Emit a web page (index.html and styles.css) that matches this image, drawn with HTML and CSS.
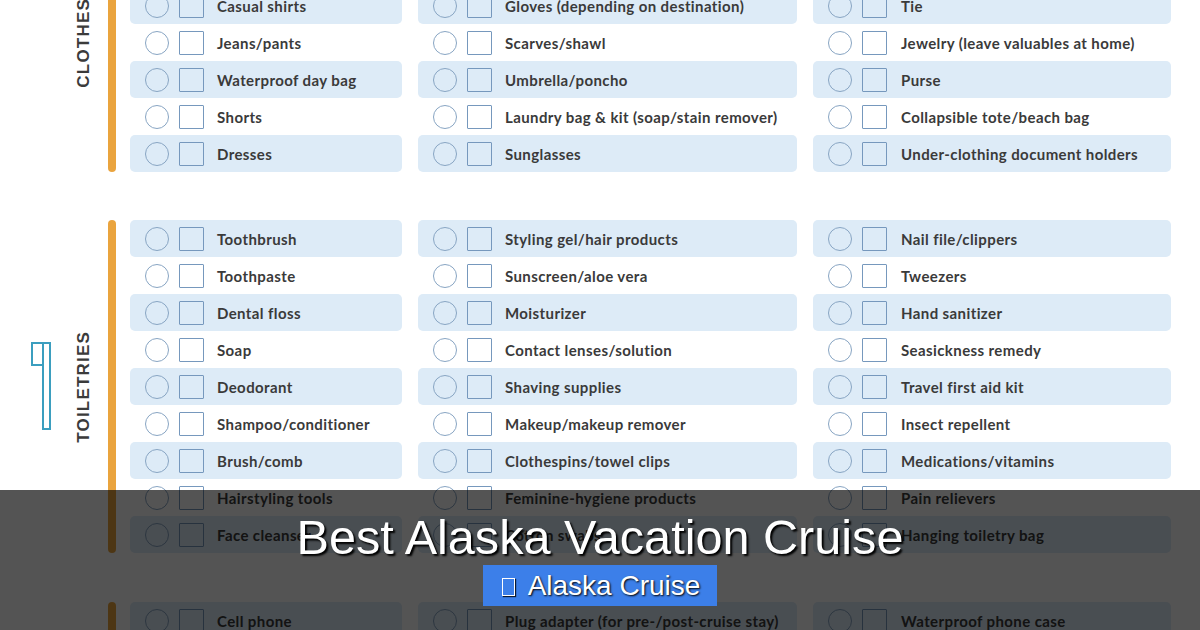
FILE: index.html
```html
<!DOCTYPE html>
<html lang="en">
<head>
<meta charset="utf-8">
<title>Best Alaska Vacation Cruise</title>
<link rel="stylesheet" href="styles.css">
</head>
<body>
<main class="sheet">
  <section class="sec sec-clothes">
    <div class="side">
      <div class="icon"></div>
      <h2 class="label">CLOTHES</h2>
    </div>
    <div class="bar"></div>
    <div class="grid">
      <ul class="col c1">
        <li class="row"><i class="circ"></i><i class="box"></i><span>Shirts/blouses</span></li>
        <li class="row"><i class="circ"></i><i class="box"></i><span>Sweaters</span></li>
        <li class="row"><i class="circ"></i><i class="box"></i><span>Casual shirts</span></li>
        <li class="row"><i class="circ"></i><i class="box"></i><span>Jeans/pants</span></li>
        <li class="row"><i class="circ"></i><i class="box"></i><span>Waterproof day bag</span></li>
        <li class="row"><i class="circ"></i><i class="box"></i><span>Shorts</span></li>
        <li class="row"><i class="circ"></i><i class="box"></i><span>Dresses</span></li>
      </ul>
      <ul class="col c2">
        <li class="row"><i class="circ"></i><i class="box"></i><span>Rain jacket</span></li>
        <li class="row"><i class="circ"></i><i class="box"></i><span>Hat</span></li>
        <li class="row"><i class="circ"></i><i class="box"></i><span>Gloves (depending on destination)</span></li>
        <li class="row"><i class="circ"></i><i class="box"></i><span>Scarves/shawl</span></li>
        <li class="row"><i class="circ"></i><i class="box"></i><span>Umbrella/poncho</span></li>
        <li class="row"><i class="circ"></i><i class="box"></i><span>Laundry bag &amp; kit (soap/stain remover)</span></li>
        <li class="row"><i class="circ"></i><i class="box"></i><span>Sunglasses</span></li>
      </ul>
      <ul class="col c3">
        <li class="row"><i class="circ"></i><i class="box"></i><span>Belt</span></li>
        <li class="row"><i class="circ"></i><i class="box"></i><span>Formal wear</span></li>
        <li class="row"><i class="circ"></i><i class="box"></i><span>Tie</span></li>
        <li class="row"><i class="circ"></i><i class="box"></i><span>Jewelry (leave valuables at home)</span></li>
        <li class="row"><i class="circ"></i><i class="box"></i><span>Purse</span></li>
        <li class="row"><i class="circ"></i><i class="box"></i><span>Collapsible tote/beach bag</span></li>
        <li class="row"><i class="circ"></i><i class="box"></i><span>Under-clothing document holders</span></li>
      </ul>
    </div>
  </section>

  <section class="sec sec-toiletries">
    <div class="side">
      <div class="icon">
        <svg width="20" height="90" viewBox="0 0 20 90" aria-hidden="true">
          <rect x="1" y="1" width="11" height="22" fill="none" stroke="#3b9ebf" stroke-width="2"/>
          <rect x="12" y="1" width="7" height="86" fill="none" stroke="#3b9ebf" stroke-width="2"/>
        </svg>
      </div>
      <h2 class="label">TOILETRIES</h2>
    </div>
    <div class="bar"></div>
    <div class="grid">
      <ul class="col c1">
        <li class="row"><i class="circ"></i><i class="box"></i><span>Toothbrush</span></li>
        <li class="row"><i class="circ"></i><i class="box"></i><span>Toothpaste</span></li>
        <li class="row"><i class="circ"></i><i class="box"></i><span>Dental floss</span></li>
        <li class="row"><i class="circ"></i><i class="box"></i><span>Soap</span></li>
        <li class="row"><i class="circ"></i><i class="box"></i><span>Deodorant</span></li>
        <li class="row"><i class="circ"></i><i class="box"></i><span>Shampoo/conditioner</span></li>
        <li class="row"><i class="circ"></i><i class="box"></i><span>Brush/comb</span></li>
        <li class="row"><i class="circ"></i><i class="box"></i><span>Hairstyling tools</span></li>
        <li class="row"><i class="circ"></i><i class="box"></i><span>Face cleanser</span></li>
      </ul>
      <ul class="col c2">
        <li class="row"><i class="circ"></i><i class="box"></i><span>Styling gel/hair products</span></li>
        <li class="row"><i class="circ"></i><i class="box"></i><span>Sunscreen/aloe vera</span></li>
        <li class="row"><i class="circ"></i><i class="box"></i><span>Moisturizer</span></li>
        <li class="row"><i class="circ"></i><i class="box"></i><span>Contact lenses/solution</span></li>
        <li class="row"><i class="circ"></i><i class="box"></i><span>Shaving supplies</span></li>
        <li class="row"><i class="circ"></i><i class="box"></i><span>Makeup/makeup remover</span></li>
        <li class="row"><i class="circ"></i><i class="box"></i><span>Clothespins/towel clips</span></li>
        <li class="row"><i class="circ"></i><i class="box"></i><span>Feminine-hygiene products</span></li>
        <li class="row"><i class="circ"></i><i class="box"></i><span>Cotton swabs</span></li>
      </ul>
      <ul class="col c3">
        <li class="row"><i class="circ"></i><i class="box"></i><span>Nail file/clippers</span></li>
        <li class="row"><i class="circ"></i><i class="box"></i><span>Tweezers</span></li>
        <li class="row"><i class="circ"></i><i class="box"></i><span>Hand sanitizer</span></li>
        <li class="row"><i class="circ"></i><i class="box"></i><span>Seasickness remedy</span></li>
        <li class="row"><i class="circ"></i><i class="box"></i><span>Travel first aid kit</span></li>
        <li class="row"><i class="circ"></i><i class="box"></i><span>Insect repellent</span></li>
        <li class="row"><i class="circ"></i><i class="box"></i><span>Medications/vitamins</span></li>
        <li class="row"><i class="circ"></i><i class="box"></i><span>Pain relievers</span></li>
        <li class="row"><i class="circ"></i><i class="box"></i><span>Hanging toiletry bag</span></li>
      </ul>
    </div>
  </section>

  <section class="sec sec-tech">
    <div class="side">
      <div class="icon"></div>
      <h2 class="label">TECH</h2>
    </div>
    <div class="bar"></div>
    <div class="grid">
      <ul class="col c1">
        <li class="row"><i class="circ"></i><i class="box"></i><span>Cell phone</span></li>
        <li class="row"><i class="circ"></i><i class="box"></i><span>Phone charger</span></li>
      </ul>
      <ul class="col c2">
        <li class="row"><i class="circ"></i><i class="box"></i><span>Plug adapter (for pre-/post-cruise stay)</span></li>
        <li class="row"><i class="circ"></i><i class="box"></i><span>Power strip</span></li>
      </ul>
      <ul class="col c3">
        <li class="row"><i class="circ"></i><i class="box"></i><span>Waterproof phone case</span></li>
        <li class="row"><i class="circ"></i><i class="box"></i><span>Camera</span></li>
      </ul>
    </div>
  </section>
</main>

<div class="overlay">
  <h1 class="title">Best Alaska Vacation Cruise</h1>
  <div class="badge"><span class="tofu"></span>Alaska Cruise</div>
</div>
</body>
</html>
```

FILE: styles.css
```css
* { box-sizing: border-box; }

html, body {
  margin: 0;
  padding: 0;
  width: 1200px;
  height: 630px;
  overflow: hidden;
  background: #ffffff;
}

body {
  position: relative;
  font-family: Lato, "Liberation Sans", sans-serif;
  color: #3a3a3a;
}

.sheet {
  margin-top: -87px;
  display: flex;
  flex-direction: column;
  gap: 48px;
}

.sec {
  display: flex;
  align-items: stretch;
}

.sec-tech { margin-top: 1px; }

.side {
  width: 108px;
  display: flex;
  align-items: center;
  padding-left: 31px;
}

.icon {
  width: 20px;
  height: 90px;
  display: flex;
  align-items: center;
}

.label {
  margin: 0 0 0 24px;
  writing-mode: vertical-rl;
  transform: rotate(180deg);
  font-family: "Liberation Sans", Arial, sans-serif;
  font-weight: 700;
  font-size: 17px;
  letter-spacing: 1.2px;
  color: #3b3b3b;
  line-height: 17px;
}

.bar {
  width: 8px;
  border-radius: 4px;
  background: #eaa43e;
  margin-right: 14px;
}

.grid {
  display: grid;
  grid-template-columns: 272px 379px 358px;
  column-gap: 16px;
}

.col {
  list-style: none;
  margin: 0;
  padding: 0;
}

.row {
  height: 37px;
  display: flex;
  align-items: center;
  padding-left: 15px;
  border-radius: 5px;
  font-size: 15px;
  font-weight: 700;
  letter-spacing: 0.4px;
  white-space: nowrap;
}

.row:nth-child(odd) {
  background: #ddebf7;
}

.c3 .row span { margin-left: 1px; }

.circ {
  width: 24px;
  height: 24px;
  border: 1.5px solid #88a5c3;
  border-radius: 50%;
  flex: none;
}

.box {
  width: 25px;
  height: 24px;
  margin-left: 10px;
  margin-right: 13px;
  border: 1.5px solid #7698bd;
  border-radius: 1px;
  flex: none;
}

.sec-tech .side { align-items: flex-start; padding-top: 40px; }

/* overlay */
.overlay {
  position: absolute;
  left: 0;
  top: 490px;
  width: 1200px;
  height: 140px;
  background: rgba(0, 0, 0, 0.67);
  display: flex;
  flex-direction: column;
  align-items: center;
  padding-top: 20px;
  font-family: "Liberation Sans", Arial, sans-serif;
}

.title {
  margin: 0;
  font-size: 48.6px;
  line-height: 54px;
  font-weight: 400;
  color: #ffffff;
  text-shadow: 2px 2px 2px #000000;
}

.badge {
  margin-top: 1px;
  height: 41px;
  line-height: 41px;
  padding: 0 17px 0 19px;
  background: #3c7fe9;
  color: #ffffff;
  font-size: 28px;
  text-shadow: 1px 1px 2px #000000;
  display: flex;
  align-items: center;
}

.tofu {
  display: inline-block;
  width: 13px;
  height: 18px;
  border: 1.5px solid #ffffff;
  box-shadow: 1px 1px 1px rgba(0,0,0,0.8);
  margin-right: 13px;
  margin-top: 3px;
}
```
